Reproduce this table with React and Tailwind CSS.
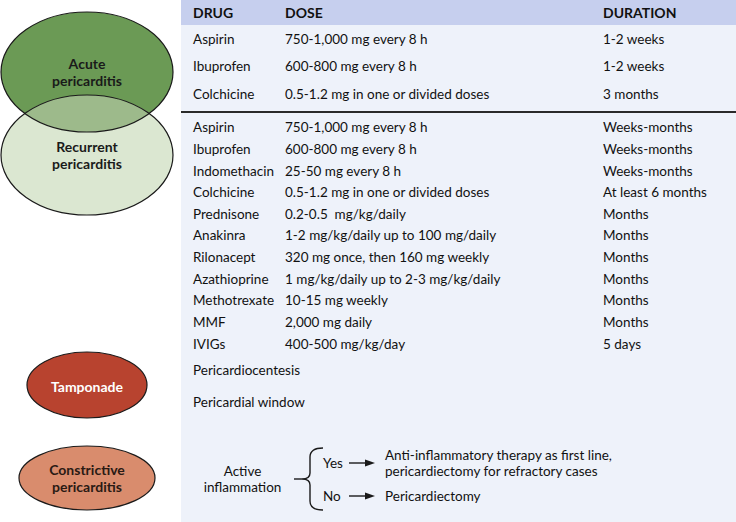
const acuteRows = [
  ["Aspirin", "750-1,000 mg every 8 h", "1-2 weeks"],
  ["Ibuprofen", "600-800 mg every 8 h", "1-2 weeks"],
  ["Colchicine", "0.5-1.2 mg in one or divided doses", "3 months"],
]

const recurrentRows = [
  ["Aspirin", "750-1,000 mg every 8 h", "Weeks-months"],
  ["Ibuprofen", "600-800 mg every 8 h", "Weeks-months"],
  ["Indomethacin", "25-50 mg every 8 h", "Weeks-months"],
  ["Colchicine", "0.5-1.2 mg in one or divided doses", "At least 6 months"],
  ["Prednisone", "0.2-0.5  mg/kg/daily", "Months"],
  ["Anakinra", "1-2 mg/kg/daily up to 100 mg/daily", "Months"],
  ["Rilonacept", "320 mg once, then 160 mg weekly", "Months"],
  ["Azathioprine", "1 mg/kg/daily up to 2-3 mg/kg/daily", "Months"],
  ["Methotrexate", "10-15 mg weekly", "Months"],
  ["MMF", "2,000 mg daily", "Months"],
  ["IVIGs", "400-500 mg/kg/day", "5 days"],
]

function Row({ cells, height }) {
  return (
    <div className={`flex items-center ${height}`}>
      <div className="w-[92px] shrink-0">{cells[0]}</div>
      <div className="w-[318px] shrink-0 whitespace-pre">{cells[1]}</div>
      <div>{cells[2]}</div>
    </div>
  )
}

function Arrow() {
  return (
    <svg width="27" height="8" viewBox="0 0 27 8" className="shrink-0">
      <line x1="0" y1="4" x2="19" y2="4" stroke="#1a1a1a" strokeWidth="1.4" />
      <path d="M16 0.5 L26 4 L16 7.5 Z" fill="#1a1a1a" />
    </svg>
  )
}

function Ellipses() {
  return (
    <svg width="181" height="522" viewBox="0 0 181 522" className="shrink-0">
      <defs>
        <clipPath id="acuteClip">
          <ellipse cx="87" cy="72" rx="86" ry="60" />
        </clipPath>
      </defs>
      <ellipse cx="87" cy="72" rx="86" ry="60" fill="#6b9a55" />
      <ellipse cx="87" cy="155" rx="86" ry="60" fill="#dbe7d1" />
      <ellipse cx="87" cy="155" rx="86" ry="60" fill="#9dba8b" clipPath="url(#acuteClip)" />
      <ellipse cx="87" cy="72" rx="86" ry="60" fill="none" stroke="#1a1a1a" strokeWidth="1.2" />
      <ellipse cx="87" cy="155" rx="86" ry="60" fill="none" stroke="#1a1a1a" strokeWidth="1.2" />
      <ellipse cx="87" cy="385" rx="60" ry="33" fill="#b8432f" stroke="#1a1a1a" strokeWidth="1.2" />
      <ellipse cx="87" cy="478" rx="68" ry="32" fill="#d98c6d" stroke="#1a1a1a" strokeWidth="1.2" />
    </svg>
  )
}

export default function App() {
  return (
    <div
      className="w-[736px] h-[522px] flex bg-white text-[#111] text-[13.5px] overflow-hidden"
      style={{ fontFamily: "Lato, 'Open Sans', sans-serif" }}
    >
      <div className="relative w-[181px] shrink-0">
        <Ellipses />
        <div className="absolute left-0 w-[174px] top-[55px] text-center font-bold text-[14px] leading-[17px] text-[#1a1a1a]">
          Acute
          <br />
          pericarditis
        </div>
        <div className="absolute left-0 w-[174px] top-[138px] text-center font-bold text-[14px] leading-[17px] text-[#1a1a1a]">
          Recurrent
          <br />
          pericarditis
        </div>
        <div className="absolute left-0 w-[174px] top-[378px] text-center font-bold text-[14px] leading-[17px] text-white">
          Tamponade
        </div>
        <div className="absolute left-0 w-[174px] top-[461px] text-center font-bold text-[14px] leading-[17px] text-[#2a1a14]">
          Constrictive
          <br />
          pericarditis
        </div>
      </div>

      <div className="flex-1 bg-[#eef2fa] flex flex-col">
        <div className="h-[25px] bg-[#c6cfee] pl-[12px] flex items-center font-bold text-[14px]">
          <div className="w-[92px] shrink-0">DRUG</div>
          <div className="w-[318px] shrink-0">DOSE</div>
          <div>DURATION</div>
        </div>

        <div className="pl-[12px]">
          {acuteRows.map((r) => (
            <Row key={r[0]} cells={r} height="h-[27.5px]" />
          ))}
        </div>

        <div className="mt-[3px] h-[2px] bg-[#2a2a2a]" />

        <div className="pl-[12px] pt-[4px]">
          {recurrentRows.map((r) => (
            <Row key={r[0]} cells={r} height="h-[21.67px]" />
          ))}
        </div>

        <div className="pl-[12px] flex flex-col">
          <div className="h-[31px] flex items-center">Pericardiocentesis</div>
          <div className="h-[32px] flex items-center">Pericardial window</div>
        </div>

        <div className="flex items-center mt-[29px]">
          <div className="w-[113px] text-center leading-[16px] pl-[10px]">
            Active
            <br />
            inflammation
          </div>
          <svg width="30" height="64" viewBox="0 0 30 64" className="shrink-0">
            <path
              d="M29 1 Q16 1 16 10 L16 26 Q16 32 8 32 Q16 32 16 38 L16 54 Q16 63 29 63"
              fill="none"
              stroke="#1a1a1a"
              strokeWidth="1.4"
            />
            <line x1="0" y1="32" x2="8" y2="32" stroke="#1a1a1a" strokeWidth="1.4" />
          </svg>
          <div className="flex flex-col gap-[3px] ml-[-1px]">
            <div className="flex items-center">
              <div className="w-[26px]">Yes</div>
              <Arrow />
              <div className="ml-[9px] leading-[16px]">
                Anti-inflammatory therapy as first line,
                <br />
                pericardiectomy for refractory cases
              </div>
            </div>
            <div className="flex items-center h-[28px]">
              <div className="w-[26px]">No</div>
              <Arrow />
              <div className="ml-[9px]">Pericardiectomy</div>
            </div>
          </div>
        </div>
      </div>
    </div>
  )
}
